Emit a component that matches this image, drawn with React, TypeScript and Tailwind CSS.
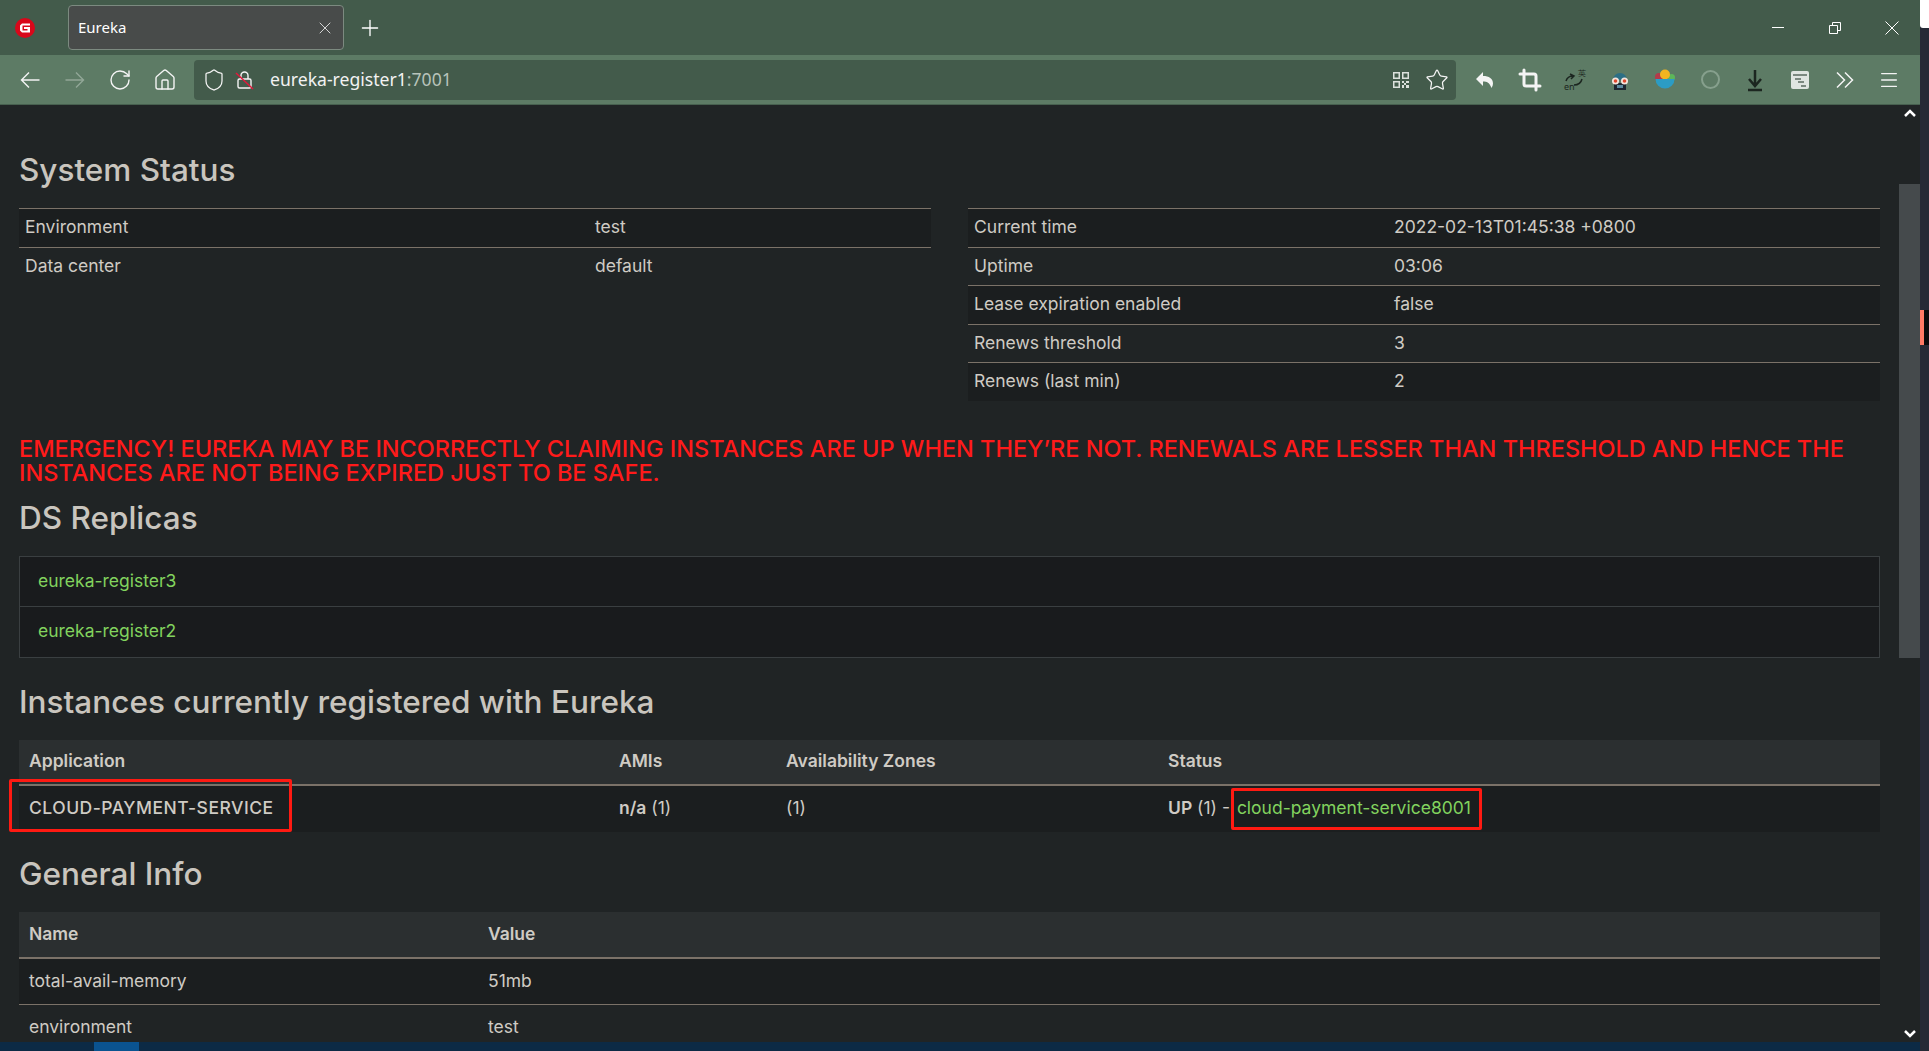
import { Home, RotateCw, Shield, Star, Plus, X, Menu, Crop } from 'lucide-react'

function Heading({ children, className }: { children: string; className: string }) {
  return <h2 className={`text-[31.500px] leading-[36px] font-medium text-[#c9c5be] ${className}`}>{children}</h2>
}

function Row({ label, value, dark, col }: { label: string; value: string; dark?: boolean; col: string }) {
  return (
    <div className={`flex h-[38.5px] items-center border-t border-[#7b7268] px-[6px] pb-[1px] text-[#cfcbc4] ${dark ? 'bg-[#1b1e1f]' : ''}`}>
      <div className={col}>{label}</div>
      <div>{value}</div>
    </div>
  )
}

function TitleBar() {
  return (
    <div className="flex h-[55px] items-center bg-[#435b4b] font-['Noto_Sans',sans-serif] text-white">
      <svg className="ml-[15px]" width="20" height="20" viewBox="0 0 20 20">
        <circle cx="10" cy="10" r="10" fill="#d9071a" />
        <path d="M15 5.500H7L5 7.500v5l2 2h8v-5.500h-6v2h3.500v1.500H7.500v-5H15z" fill="white" />
      </svg>
      <div className="ml-[33px] flex h-[45px] w-[276px] items-center justify-between rounded-[4px] border border-[#7c8a80] bg-[#484b4a] pl-[9px] pr-[8px] text-[15px]">
        <span>Eureka</span>
        <X size={20} strokeWidth={1.2} className="text-[#d5d5d5]" />
      </div>
      <Plus size={26} strokeWidth={1.25} className="ml-[13px]" />
      <div className="ml-auto flex items-center">
        <div className="flex w-[57px] justify-center">
          <svg width="12" height="12" viewBox="0 0 12 12" stroke="white"><path d="M0 5.500h12" /></svg>
        </div>
        <div className="flex w-[57px] justify-center">
          <svg width="12" height="12" viewBox="0 0 12 12" fill="none" stroke="white"><path d="M.5 3.500h8v8h-8zM3.500 3.500v-3h8v8h-3" /></svg>
        </div>
        <div className="flex w-[57px] justify-center">
          <svg width="14" height="14" viewBox="0 0 14 14" stroke="white"><path d="M.5.500l13 13M13.500.500l-13 13" /></svg>
        </div>
      </div>
    </div>
  )
}

function Toolbar() {
  return (
    <div className="flex h-[50px] items-center border-b border-[#47604f] bg-[#5d7b65] font-['Noto_Sans',sans-serif] text-[#f4f4f4]">
      <div className="ml-[18px] flex items-center gap-[21px]">
        <svg width="24" height="24" viewBox="0 0 24 24" fill="none" stroke="currentColor" strokeWidth="1.400"><path d="M21.500 12h-18M11 4.500L3.500 12l7.500 7.500" /></svg>
        <svg width="24" height="24" viewBox="0 0 24 24" fill="none" stroke="#92a797" strokeWidth="1.400"><path d="M2.500 12h18M13 4.500l7.500 7.500-7.500 7.500" /></svg>
        <RotateCw size={24} strokeWidth={1.4} />
        <Home size={24} strokeWidth={1.4} />
      </div>
      <div className="ml-[17px] flex h-[40px] w-[1262px] items-center rounded-[4px] bg-[#435b4b] pl-[8px] pr-[7px]">
        <Shield size={24} strokeWidth={1.25} />
        <svg className="ml-[9px]" width="20" height="20" viewBox="0 0 20 20" fill="none" stroke="#f4f4f4" strokeWidth="1.400">
          <rect x="3" y="9" width="13" height="9" rx="1.500" />
          <path d="M6 9V5.500a3.500 3.500 0 0 1 7 0V9" />
          <path d="M1 3l17 16" stroke="#e0193c" strokeWidth="1.600" />
        </svg>
        <span className="ml-[15px] text-[17.600px] text-[#f2f2f2]">eureka-register1<span className="text-[#b7c3ba]">:7001</span></span>
        <svg className="ml-auto" width="18" height="18" viewBox="0 0 18 18" fill="#dbe1dc">
          <path d="M1 1h7v7H1zM2.500 2.500v4h4v-4zM10 1h7v7h-7zM11.500 2.500v4h4v-4zM1 10h7v7H1zM2.500 11.500v4h4v-4z" fillRule="evenodd" />
          <path d="M10 10h2v2h-2zM14 10h3v2h-3zM12 12h2v2h-2zM10 14h2v3h-2zM14 14h3v3h-3z" />
        </svg>
        <Star size={24} strokeWidth={1.25} className="ml-[15px]" />
      </div>
      <div className="ml-[17px] flex items-center gap-[21px]">
        <svg width="24" height="24" viewBox="0 0 24 24" fill="currentColor"><path d="M10 4L3 11l7 7v-4.500c4 0 6.500 1 8.500 6.500 1-1.500 1.500-3 1.500-4.500 0-5-4-7.500-10-7.500z" /></svg>
        <Crop size={24} strokeWidth={3} />
        <svg width="24" height="24" viewBox="0 0 24 24" fill="none" stroke="#1c2620" strokeWidth="1.500">
          <path d="M3 13c1-3 4-5 7-5M7 6l4 2-3 3M11 17c4 0 7-2 8-6" />
          <text x="1" y="22" fontSize="9" fill="#1c2620" stroke="none">en</text>
          <text x="15" y="8" fontSize="8" fill="#1c2620" stroke="none">英</text>
        </svg>
        <svg width="24" height="24" viewBox="0 0 24 24">
          <path d="M5 12a7 7 0 0 1 14 0z" fill="#2d6f85" />
          <rect x="6" y="15" width="12" height="7" fill="#1c2630" />
          <rect x="9" y="17" width="6" height="3" fill="#5c8aa0" />
          <circle cx="7.500" cy="13" r="3.500" fill="#f4e5dc" />
          <circle cx="16.500" cy="13" r="3.500" fill="#f4e5dc" />
          <circle cx="7.500" cy="13" r="1.800" fill="#e0482e" />
          <circle cx="16.500" cy="13" r="1.800" fill="#e0482e" />
        </svg>
        <svg width="24" height="24" viewBox="0 0 24 24">
          <circle cx="6" cy="9" r="4" fill="#b33a4a" />
          <circle cx="18.500" cy="9.500" r="3.500" fill="#5db55a" />
          <circle cx="12" cy="6.500" r="5" fill="#f2b420" />
          <path d="M2.500 11h19a9.500 9.500 0 0 1-19 0z" fill="#2c9cc4" />
        </svg>
        <div className="flex h-[24px] w-[24px] items-center justify-center">
          <div className="h-[19px] w-[19px] rounded-full border-2 border-[#86a08d]" />
        </div>
        <svg width="24" height="24" viewBox="0 0 24 24" fill="none" stroke="#1c2620" strokeWidth="2.500">
          <path d="M12 2v16M6 11l6 7 6-7M5 22h14" />
        </svg>
        <svg width="24" height="24" viewBox="0 0 24 24">
          <rect x="3" y="3" width="18" height="18" rx="2" fill="#dfe5e1" />
          <path d="M5 7h14M7 11h6M10 14h6M13 18h5" stroke="#5b6b60" strokeWidth="1.500" />
        </svg>
        <svg width="24" height="24" viewBox="0 0 24 24" fill="none" stroke="currentColor" strokeWidth="1.500">
          <path d="M4 4.500l7.500 7.500L4 19.500M12 4.500l7.500 7.500-7.500 7.500" />
        </svg>
        <Menu size={22} strokeWidth={1.5} />
      </div>
    </div>
  )
}

function Page() {
  return (
    <div className="relative min-h-0 flex-1 overflow-hidden bg-[#202425] pl-[19px] font-['Inter',sans-serif] text-[17.500px] text-[#cfcbc4]">
      <div className="w-[1861px]">
        <Heading className="mt-[47px]">System Status</Heading>
        <div className="mt-[20px] flex items-start justify-between">
          <div className="w-[912px]">
            <Row col="w-[570px]" label="Environment" value="test" dark />
            <Row col="w-[570px]" label="Data center" value="default" />
          </div>
          <div className="w-[912px]">
            <Row col="w-[420px]" label="Current time" value="2022-02-13T01:45:38 +0800" dark />
            <Row col="w-[420px]" label="Uptime" value="03:06" />
            <Row col="w-[420px]" label="Lease expiration enabled" value="false" dark />
            <Row col="w-[420px]" label="Renews threshold" value="3" />
            <Row col="w-[420px]" label="Renews (last min)" value="2" dark />
          </div>
        </div>
        <p className="mt-[36px] text-[23.500px] leading-[24px] font-medium text-[#ff1a1a]">
          EMERGENCY! EUREKA MAY BE INCORRECTLY CLAIMING INSTANCES ARE UP WHEN THEY’RE NOT. RENEWALS ARE LESSER THAN THRESHOLD AND HENCE THE INSTANCES ARE NOT BEING EXPIRED JUST TO BE SAFE.
        </p>
        <Heading className="mt-[15px]">DS Replicas</Heading>
        <div className="mt-[20px] border border-[#3a3f41] bg-[#191b1d] text-[#82d35e]">
          <div className="flex h-[50px] items-center border-b border-[#3a3f41] pl-[18px]">eureka-register3</div>
          <div className="flex h-[50px] items-center pl-[18px]">eureka-register2</div>
        </div>
        <Heading className="mt-[26px]">Instances currently registered with Eureka</Heading>
        <div className="mt-[20px]">
          <div className="flex h-[46px] items-center border-b-2 border-[#7b7268] bg-[#2b2f30] pl-[10px] font-semibold">
            <div className="w-[590px]">Application</div>
            <div className="w-[167px]">AMIs</div>
            <div className="w-[382px]">Availability Zones</div>
            <div>Status</div>
          </div>
          <div className="relative flex h-[46px] items-center bg-[#1b1e1f] pl-[10px]">
            <div className="w-[590px] font-medium tracking-[0.5px]">CLOUD-PAYMENT-SERVICE</div>
            <div className="w-[167px]"><span className="font-semibold">n/a</span> (1)</div>
            <div className="w-[382px]">(1)</div>
            <div><span className="font-semibold">UP</span> (1) - <span className="ml-[2px] text-[#82d35e]">cloud-payment-service8001</span></div>
            {/* red annotation boxes */}
            <div className="absolute left-[-10px] top-[-7px] h-[53px] w-[283px] rounded-[2px] border-[3px] border-[#ff1a12]" />
            <div className="absolute left-[1212px] top-[2px] h-[42px] w-[251px] rounded-[2px] border-[3px] border-[#ff1a12]" />
          </div>
        </div>
        <Heading className="mt-[24px]">General Info</Heading>
        <div className="mt-[20px]">
          <div className="flex h-[47px] items-center border-b-2 border-[#7b7268] bg-[#2b2f30] pl-[10px] font-semibold">
            <div className="w-[459px]">Name</div>
            <div>Value</div>
          </div>
          <div className="flex h-[46px] items-center border-b border-[#7b7268] bg-[#1b1e1f] pl-[10px]">
            <div className="w-[459px]">total-avail-memory</div>
            <div>51mb</div>
          </div>
          <div className="flex h-[46px] items-center pl-[10px]">
            <div className="w-[459px]">environment</div>
            <div>test</div>
          </div>
        </div>
      </div>
      {/* scrollbar */}
      <div className="absolute right-0 top-0 flex h-full w-[21px] flex-col items-center justify-between py-[2px]">
        <svg width="12" height="12" viewBox="0 0 12 12" fill="none" stroke="white" strokeWidth="2.500"><path d="M1 9l5-5 5 5" /></svg>
        <svg width="12" height="12" viewBox="0 0 12 12" fill="none" stroke="white" strokeWidth="2.500"><path d="M1 3l5 5 5-5" /></svg>
      </div>
      <div className="absolute right-0 top-[79px] h-[474px] w-[21px] bg-[#454a4c]" />
    </div>
  )
}

export default function App() {
  return (
    <div className="flex h-[1051px] w-[1929px] overflow-hidden">
      <div className="flex w-[1920px] flex-col">
        <TitleBar />
        <Toolbar />
        <Page />
        <div className="flex h-[9px] bg-[#0c2a45]">
          <div className="ml-[94px] w-[45px] bg-[#0a5390]" />
        </div>
      </div>
      <div className="flex w-[9px] flex-col bg-[#262a36]">
        <div className="h-[28px] rounded-bl-[3px] bg-white" />
        <div className="mt-[282px] flex h-[35px]">
          <div className="w-[4px] bg-[#ff7a66]" />
          <div className="w-[5px] bg-[#0a0a0c]" />
        </div>
      </div>
    </div>
  )
}
